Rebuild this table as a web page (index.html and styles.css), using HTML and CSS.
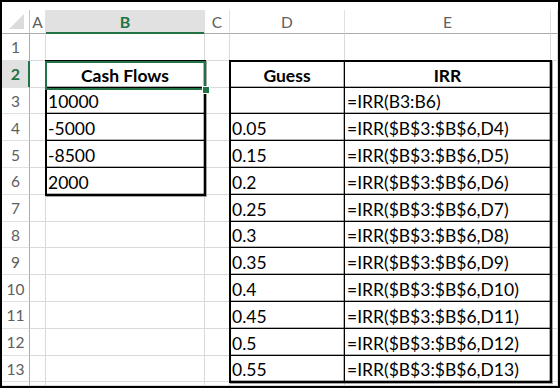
FILE: index.html
```html
<!DOCTYPE html>
<html>
<head>
<meta charset="utf-8">
<link rel="stylesheet" href="styles.css">
</head>
<body>
<div class="frame">
  <div class="stack">
    <div class="tpl sheet">
      <div class="c corner"><svg width="26" height="22" viewBox="0 0 26 22"><polygon points="22,4 22,19 7,19" fill="#dcdcdc"/></svg></div>
      <div class="c ch">A</div><div class="c ch sel">B</div><div class="c ch">C</div><div class="c ch">D</div><div class="c ch">E</div><div class="c ch"></div>

      <div class="c rh">1</div><div class="c"></div><div class="c"></div><div class="c"></div><div class="c"></div><div class="c"></div><div class="c"></div>

      <div class="c rh sel">2</div><div class="c"></div><div class="c b hd">Cash Flows</div><div class="c"></div><div class="c b hd">Guess</div><div class="c b hd">IRR</div><div class="c"></div>

      <div class="c rh">3</div><div class="c"></div><div class="c b">10000</div><div class="c"></div><div class="c b"></div><div class="c b">=IRR(B3:B6)</div><div class="c"></div>

      <div class="c rh">4</div><div class="c"></div><div class="c b">-5000</div><div class="c"></div><div class="c b">0.05</div><div class="c b">=IRR($B$3:$B$6,D4)</div><div class="c"></div>

      <div class="c rh">5</div><div class="c"></div><div class="c b">-8500</div><div class="c"></div><div class="c b">0.15</div><div class="c b">=IRR($B$3:$B$6,D5)</div><div class="c"></div>

      <div class="c rh">6</div><div class="c"></div><div class="c b">2000</div><div class="c"></div><div class="c b">0.2</div><div class="c b">=IRR($B$3:$B$6,D6)</div><div class="c"></div>

      <div class="c rh">7</div><div class="c"></div><div class="c"></div><div class="c"></div><div class="c b">0.25</div><div class="c b">=IRR($B$3:$B$6,D7)</div><div class="c"></div>

      <div class="c rh">8</div><div class="c"></div><div class="c"></div><div class="c"></div><div class="c b">0.3</div><div class="c b">=IRR($B$3:$B$6,D8)</div><div class="c"></div>

      <div class="c rh">9</div><div class="c"></div><div class="c"></div><div class="c"></div><div class="c b">0.35</div><div class="c b">=IRR($B$3:$B$6,D9)</div><div class="c"></div>

      <div class="c rh">10</div><div class="c"></div><div class="c"></div><div class="c"></div><div class="c b">0.4</div><div class="c b">=IRR($B$3:$B$6,D10)</div><div class="c"></div>

      <div class="c rh">11</div><div class="c"></div><div class="c"></div><div class="c"></div><div class="c b">0.45</div><div class="c b">=IRR($B$3:$B$6,D11)</div><div class="c"></div>

      <div class="c rh">12</div><div class="c"></div><div class="c"></div><div class="c"></div><div class="c b">0.5</div><div class="c b">=IRR($B$3:$B$6,D12)</div><div class="c"></div>

      <div class="c rh">13</div><div class="c"></div><div class="c"></div><div class="c"></div><div class="c b">0.55</div><div class="c b">=IRR($B$3:$B$6,D13)</div><div class="c"></div>

      <div class="c rh"></div><div class="c"></div><div class="c"></div><div class="c"></div><div class="c"></div><div class="c"></div><div class="c"></div>
    </div>
    <div class="tpl over">
      <div class="box box-b"></div>
      <div class="box box-de"></div>
      <div class="selbox"><span class="handle"></span></div>
    </div>
  </div>
</div>
</body>
</html>
```

FILE: styles.css
```css
* { box-sizing: border-box; }

body {
  margin: 0;
  background: #fff;
}

.frame {
  width: 560px;
  height: 388px;
  border: 2px solid #000;
  padding-top: 8px;
  background: #fff;
  font-family: Lato, "Open Sans", sans-serif;
  color: #000;
  overflow: hidden;
}

.stack {
  display: grid;
  height: 100%;
}

.stack > .tpl {
  grid-area: 1 / 1;
}

.tpl {
  display: grid;
  grid-template-columns: 28px 16px 159px 25px 115px 206px 1fr;
  grid-template-rows: 24px repeat(13, 26.8px) 1fr;
}

.over {
  pointer-events: none;
}

.c {
  border-right: 1px solid #dadada;
  border-bottom: 1px solid #dadada;
  background: #fff;
  font-size: 17.5px;
  line-height: 20px;
  padding: 0 2px 1px 2px;
  display: flex;
  align-items: flex-end;
  white-space: nowrap;
}

.corner {
  border-right-color: #c6c6c6;
  border-bottom-color: #ababab;
  padding: 0;
  align-items: flex-start;
}

.ch {
  justify-content: center;
  align-items: center;
  font-size: 15.5px;
  color: #5e5e5e;
  border-right-color: #e1e1e1;
  border-bottom-color: #ababab;
  padding: 0;
}

.rh {
  justify-content: center;
  align-items: center;
  font-size: 15.5px;
  color: #5e5e5e;
  border-right-color: #ababab;
  border-bottom-color: #e1e1e1;
  padding: 1px 0 0 0;
}

.ch.sel {
  background: #e1e1e1;
  color: #217346;
  font-weight: 700;
  font-size: 16px;
  border-bottom-color: #217346;
  box-shadow: inset 0 -1px 0 #217346;
}

.rh.sel {
  background: #e1e1e1;
  color: #217346;
  font-weight: 700;
  font-size: 16px;
  border-right-color: #217346;
  box-shadow: inset -1px 0 0 #217346;
}

.b {
  margin: -1px 0 0 -1px;
  border: 1px solid #000;
  box-shadow: inset 0 -1px 0 rgba(0, 0, 0, 0.3), inset -1px 0 0 rgba(0, 0, 0, 0.3);
}

.hd {
  justify-content: center;
  font-weight: 700;
}

.box {
  margin: -1px;
  border: 2px solid #000;
  box-shadow: 1px 1px 0 rgba(0, 0, 0, 0.35);
}

.box-b {
  grid-row: 3 / 8;
  grid-column: 3 / 4;
}

.box-de {
  grid-row: 3 / 15;
  grid-column: 5 / 7;
}

.selbox {
  grid-row: 3 / 4;
  grid-column: 3 / 4;
  margin: 0 -1px -2px -1px;
  border: 2px solid #217346;
  position: relative;
}

.handle {
  position: absolute;
  right: -5px;
  bottom: -5px;
  width: 6px;
  height: 6px;
  background: #217346;
  box-shadow: 0 0 0 1px #fff;
}
```
